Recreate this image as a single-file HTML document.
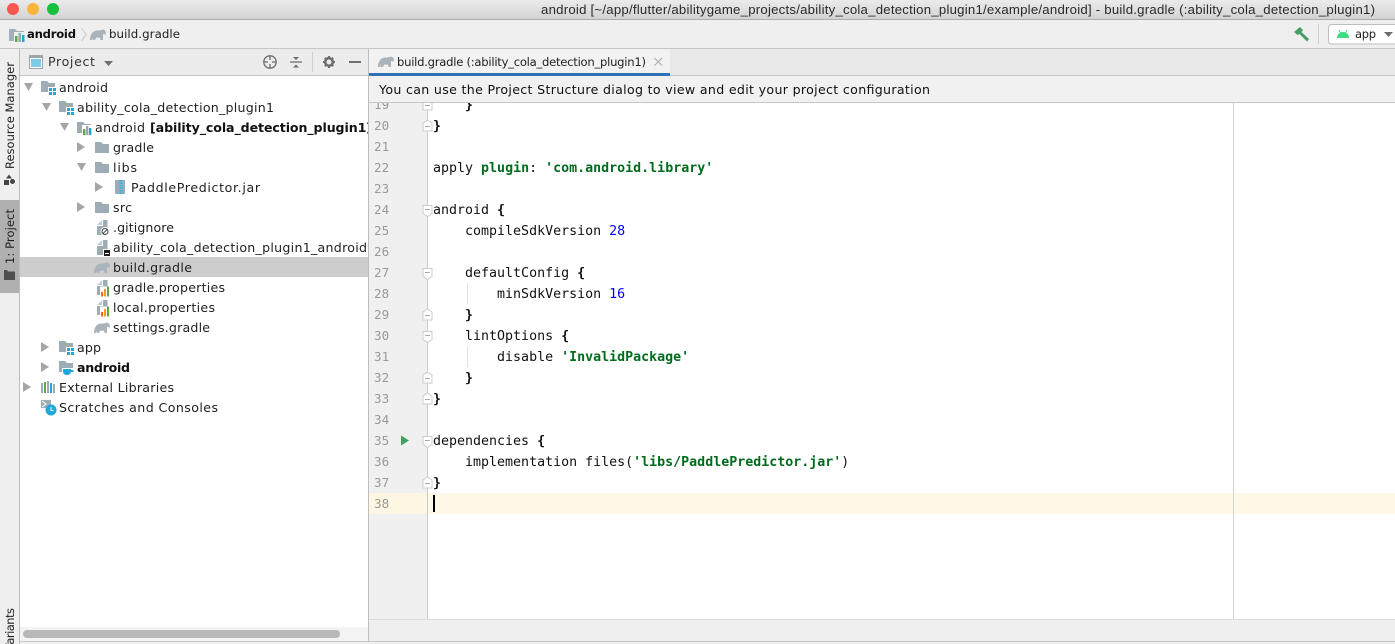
<!DOCTYPE html>
<html><head><meta charset="utf-8"><style>
html,body{margin:0;padding:0;background:#efefef;width:1395px;height:644px;overflow:hidden}
svg{display:block}
.t{font-family:"DejaVu Sans",sans-serif;font-size:12.6px;fill:#1f1f1f}
.b{font-weight:bold;fill:#111}
.c{font-family:"DejaVu Sans Mono",monospace;font-size:13.3px;fill:#111;white-space:pre}
.n{font-family:"DejaVu Sans Mono",monospace;font-size:12.6px;fill:#999}
.g{fill:#006c1c;font-weight:bold}
.k{fill:#0000ff}
.br{font-weight:bold}
</style></head><body>
<svg width="1395" height="644" viewBox="0 0 1395 644" xmlns="http://www.w3.org/2000/svg">
<defs>
<linearGradient id="tb" x1="0" y1="0" x2="0" y2="1"><stop offset="0" stop-color="#ebebeb"/><stop offset="1" stop-color="#d3d3d3"/></linearGradient>
<clipPath id="ed"><rect x="369" y="103" width="1026" height="516"/></clipPath>
<clipPath id="tr"><rect x="20" y="76" width="348" height="550"/></clipPath>
<clipPath id="lf"><rect x="0" y="49" width="19" height="595"/></clipPath>
<path id="fd" d="M0 0h6l2 2h6v9H0z" fill="#9eacb6"/>
<path id="el" d="M0 11C0 7 1.500 2 7 1.500C9 1.500 10 1.800 11 1C13 0 15.200.8 15.700 3C16 4.600 15.600 5.800 14.800 5.800L14.200 4.600L13 5.400V11H10.600L10 8.600H6L5.200 11H3.200L3 8.800L2.200 11Z" fill="#a9b3bb"/>
<g id="mod"><use href="#fd"/><rect x="7" y="6" width="9" height="9" fill="#fff"/><path d="M8 7h3v3H8zM12 7h3v3h-3zM8 11h3v3H8zM12 11h3v3h-3z" fill="#1ea7d9"/></g>
<g id="chf"><use href="#fd"/><rect x="5" y="3" width="10" height="10" fill="#fff"/><rect x="6" y="7" width="2.400" height="6" fill="#5da84a"/><rect x="9" y="4" width="2.400" height="9" fill="#9aa7b0"/><rect x="12" y="6" width="2.400" height="7" fill="#1ea7d9"/></g>
<g id="nvf"><path d="M0 0h6l2 2h7v10H0z" fill="#a3b0ba"/><rect x="5" y="3" width="11" height="10" fill="#efefef"/><rect x="6" y="7" width="2.500" height="6" fill="#5da84a"/><rect x="9.500" y="4" width="2.500" height="9" fill="#9aa7b0"/><rect x="13" y="6" width="2.500" height="7" fill="#1ea7d9"/></g>
<g id="fl"><path d="M0 5L5 0V5Z" fill="#c4ccd2"/><path d="M6 0H10.500V6H6V0ZM0 6H10.500V15H0Z" fill="#9eacb6"/></g>
<g id="pr"><use href="#fl"/><rect x="3" y="6.500" width="10" height="10" fill="#fff"/><rect x="4" y="12" width="2" height="4.500" fill="#f26522"/><rect x="7" y="9" width="2" height="7.500" fill="#f59b23"/><rect x="10" y="6.500" width="2" height="10" fill="#5da84a"/></g>
<path id="rt" d="M0 0L8 5L0 10Z" fill="#a6a6a6"/>
<path id="dn" d="M0 0H9L4.500 8Z" fill="#a6a6a6"/>
<g id="fe"><path d="M-4.500-5.500H4.500V2.500L0 5.500L-4.500 2.500Z" fill="#fff" stroke="#ccc"/><path d="M-2.500-1.500H2.500" stroke="#aaa"/></g>
<g id="fu"><path d="M-4.500 5.500H4.500V-2.500L0-5.500L-4.500-2.500Z" fill="#fff" stroke="#ccc"/><path d="M-2.500 1H2.500" stroke="#aaa"/></g>
</defs>

<!-- base -->
<rect width="1395" height="644" fill="#efefef"/>
<!-- title bar -->
<rect width="1395" height="19" fill="url(#tb)"/>
<rect y="19" width="1395" height="1" fill="#adadad"/>
<circle cx="13" cy="9" r="6" fill="#fb5650"/><circle cx="33" cy="9" r="6" fill="#fdb43c"/><circle cx="53" cy="9" r="6" fill="#18c03c"/>
<text x="541" y="14" font-family="Liberation Sans,sans-serif" font-size="13.2" fill="#2a2a2a" textLength="834" lengthAdjust="spacing">android [~/app/flutter/abilitygame_projects/ability_cola_detection_plugin1/example/android] - build.gradle (:ability_cola_detection_plugin1)</text>

<!-- nav bar -->
<rect y="48" width="1395" height="1" fill="#c6c6c6"/>
<use href="#nvf" x="9" y="29"/>
<text class="t b" x="27" y="38" textLength="49" lengthAdjust="spacing" style="font-size:11.6px">android</text>
<path d="M81.500 28L86 34.500L81.500 41" fill="none" stroke="#c8c8c8"/>
<use href="#el" x="90" y="29"/>
<text class="t" x="109" y="38" textLength="71" lengthAdjust="spacing" style="font-size:11.8px">build.gradle</text>
<path d="M1294 32L1300 27L1303 30L1301.500 32L1309 39L1307 41.500L1299.500 34L1297.500 35Z" fill="#479e62"/>
<rect x="1318" y="24" width="1" height="20" fill="#cfcfcf"/>
<rect x="1328.500" y="24.500" width="80" height="19.500" rx="3" fill="#fff" stroke="#bdbdbd"/>
<path d="M1337 38C1337 34 1340 32 1343 32C1346 32 1349 34 1349 38Z" fill="#3ddc84"/>
<path d="M1339 30L1340.500 33M1347 30L1345.500 33" stroke="#3ddc84"/>
<text class="t" x="1355" y="38" textLength="21" lengthAdjust="spacing" style="font-size:11.5px">app</text>
<path d="M1384 32H1393L1388.500 37Z" fill="#6e6e6e"/>

<!-- left strip -->
<rect x="19" y="49" width="1" height="595" fill="#bdbdbd"/>
<g clip-path="url(#lf)">
<rect x="0" y="200" width="19" height="93" fill="#b0b0b0"/>
<text class="t" transform="translate(14 169) rotate(-90)" textLength="107" lengthAdjust="spacing" style="font-size:11.500px">Resource Manager</text>
<text class="t" transform="translate(14 264) rotate(-90)" textLength="55" lengthAdjust="spacing" style="font-size:11.500px">1: Project</text>
<text class="t" transform="translate(14 651) rotate(-90)" textLength="43" lengthAdjust="spacing" style="font-size:11.500px">Variants</text>
<path d="M4 185V180H9V185ZM10 181.500A2.500 2.500 0 1 1 15 181.500A2.500 2.500 0 1 1 10 181.500ZM6 178.500L9 174.500L12 178.500Z" fill="#444"/>
<path d="M4 280V270H7L8 271.500H15V280Z" fill="#4f4f4f"/>
</g>

<!-- project header -->
<rect x="20" y="49" width="348" height="26" fill="#ececec"/>
<rect x="20" y="75" width="348" height="1" fill="#c6c6c6"/>
<rect x="29.500" y="55.500" width="13" height="13" fill="#fff" stroke="#9aa7b0"/>
<rect x="29" y="55" width="14" height="3" fill="#9aa7b0"/>
<rect x="31" y="59" width="10" height="8" fill="#7fcbe6"/>
<text class="t" x="48" y="66" textLength="47" lengthAdjust="spacing" style="fill:#333">Project</text>
<path d="M104 61H113L108.500 66Z" fill="#6e6e6e"/>
<circle cx="270" cy="62" r="6.200" fill="none" stroke="#6e6e6e" stroke-width="1.300"/>
<path d="M270 56V60M270 64V68M264 62H268M272 62H276" stroke="#6e6e6e" stroke-width="1.300"/>
<path d="M290 62H302" stroke="#6e6e6e" stroke-width="1.300"/>
<path d="M293 57H299L296 60ZM293 67.500H299L296 64.500Z" fill="#6e6e6e"/>
<rect x="312" y="52" width="1" height="20" fill="#cfcfcf"/>
<circle cx="329" cy="62" r="3.800" fill="none" stroke="#6e6e6e" stroke-width="2.600"/>
<path d="M329 56V58M329 66V68M323 62H325M333 62H335M324.800 57.800L326.200 59.200M331.800 64.800L333.200 66.200M333.200 57.800L331.800 59.200M326.200 64.800L324.800 66.200" stroke="#6e6e6e" stroke-width="2"/>
<rect x="349" y="61" width="12" height="2" fill="#6e6e6e"/>

<!-- tree -->
<rect x="20" y="76" width="348" height="551" fill="#fff"/>
<rect x="20" y="257" width="348" height="20" fill="#cdcdcd"/>
<g clip-path="url(#tr)">
<use href="#dn" x="24" y="83"/><use href="#mod" x="41" y="81"/>
<text class="t" x="59" y="92" textLength="49" lengthAdjust="spacing">android</text>
<use href="#dn" x="42" y="103"/><use href="#mod" x="59" y="101"/>
<text class="t" x="77" y="112" textLength="197" lengthAdjust="spacing">ability_cola_detection_plugin1</text>
<use href="#dn" x="60" y="123"/><use href="#chf" x="77" y="122"/>
<text class="t" x="95" y="132" textLength="50" lengthAdjust="spacing">android</text>
<text class="t b" x="150" y="132" textLength="222" lengthAdjust="spacing">[ability_cola_detection_plugin1]</text>
<use href="#rt" x="77" y="142"/><use href="#fd" x="95" y="142"/>
<text class="t" x="113" y="152" textLength="41" lengthAdjust="spacing">gradle</text>
<use href="#dn" x="77" y="163"/><use href="#fd" x="95" y="162"/>
<text class="t" x="113" y="172" textLength="24" lengthAdjust="spacing">libs</text>
<use href="#rt" x="95" y="182"/>
<rect x="115" y="180" width="10" height="14" fill="#9eacb6"/><path d="M121 180v14" stroke="#35b4e0" stroke-width="3" stroke-dasharray="1.500 1"/>
<text class="t" x="131" y="192" textLength="129" lengthAdjust="spacing">PaddlePredictor.jar</text>
<use href="#rt" x="77" y="202"/><use href="#fd" x="95" y="202"/>
<text class="t" x="113" y="212" textLength="19" lengthAdjust="spacing">src</text>

<use href="#fl" x="97" y="220"/><circle cx="105" cy="231.500" r="4.500" fill="#fff"/><circle cx="105" cy="231.500" r="3" fill="none" stroke="#444"/><path d="M103 233.500L107 229.500" stroke="#444"/>
<text class="t" x="113" y="232" textLength="61" lengthAdjust="spacing">.gitignore</text>
<use href="#fl" x="97" y="240"/><rect x="103" y="249" width="8" height="7" fill="#fff"/><rect x="104" y="250" width="6" height="6" fill="#1c1c1c"/><rect x="105" y="253" width="4" height="1" fill="#fff"/>
<text class="t" x="113" y="252" textLength="254" lengthAdjust="spacing">ability_cola_detection_plugin1_android</text>
<use href="#el" x="94" y="262"/>
<text class="t" x="113" y="272" textLength="79" lengthAdjust="spacing">build.gradle</text>
<use href="#pr" x="97" y="280"/>
<text class="t" x="113" y="292" textLength="112" lengthAdjust="spacing">gradle.properties</text>
<use href="#pr" x="97" y="300"/>
<text class="t" x="113" y="312" textLength="102" lengthAdjust="spacing">local.properties</text>
<use href="#el" x="94" y="322"/>
<text class="t" x="113" y="332" textLength="97" lengthAdjust="spacing">settings.gradle</text>

<use href="#rt" x="41" y="342"/><use href="#mod" x="59" y="341"/>
<text class="t" x="77" y="352" textLength="24" lengthAdjust="spacing">app</text>
<use href="#rt" x="41" y="362"/><use href="#fd" x="59" y="361"/>
<rect x="62" y="368" width="12" height="7" fill="#fff"/><path d="M63 369H71V371C71 374 69 375 67 375C65 375 63 374 63 371ZM71 370H73.500V372H71Z" fill="#1ea7d9"/>
<text class="t b" x="77" y="372" textLength="53" lengthAdjust="spacing">android</text>
<use href="#rt" x="23" y="382"/>
<path d="M41 383h2v10h-2z" fill="#9eacb6"/><path d="M44 382h2v11h-2z" fill="#5da84a"/><path d="M47 381h2v12h-2z" fill="#9eacb6"/><path d="M50 383h2v10h-2z" fill="#1ea7d9"/><path d="M53 384h2v9h-2z" fill="#9eacb6"/>
<text class="t" x="59" y="392" textLength="115" lengthAdjust="spacing">External Libraries</text>
<rect x="41" y="400" width="10" height="8" fill="#9eacb6"/><path d="M42 401L46 404L42 407" fill="none" stroke="#fff"/>
<circle cx="51" cy="410" r="5.500" fill="#1ea7d9"/><path d="M51 407V410.500H53.500" fill="none" stroke="#fff"/>
<text class="t" x="59" y="412" textLength="159" lengthAdjust="spacing">Scratches and Consoles</text>
</g>
<!-- tree scrollbar -->
<rect x="20" y="627" width="348" height="14" fill="#f3f3f3"/>
<rect x="23" y="630" width="317" height="8" rx="4" fill="#b8b8b8"/>
<rect x="20" y="641" width="1375" height="1" fill="#c8c8c8"/>

<!-- splitter -->
<rect x="368" y="49" width="1" height="592" fill="#bdbdbd"/>

<!-- tab bar -->
<rect x="369" y="49" width="1026" height="26" fill="#e8e8e8"/>
<rect x="369" y="49" width="301" height="24" fill="#f2f2f2"/>
<rect x="369" y="73" width="301" height="3" fill="#2f72b8"/>
<rect x="670" y="75" width="725" height="1" fill="#c6c6c6"/>
<use href="#el" x="378" y="56"/>
<text class="t" x="397" y="66" textLength="249" lengthAdjust="spacing" style="font-size:11.600px">build.gradle (:ability_cola_detection_plugin1)</text>
<path d="M654.500 58L662 65.500M662 58L654.500 65.500" stroke="#a8a8a8"/>

<!-- notification bar -->
<rect x="369" y="76" width="1026" height="26" fill="#f1f1f1"/>
<rect x="369" y="102" width="1026" height="1" fill="#c6c6c6"/>
<text class="t" x="379" y="94" textLength="551" lengthAdjust="spacing" style="fill:#111">You can use the Project Structure dialog to view and edit your project configuration</text>

<!-- editor -->
<rect x="369" y="103" width="1026" height="516" fill="#fff"/>
<rect x="369" y="103" width="58" height="516" fill="#f0f0f0"/>
<rect x="369" y="493" width="58" height="21" fill="#fcf6e2"/>
<rect x="428" y="493" width="967" height="21" fill="#fef9e6"/>
<rect x="427" y="103" width="1" height="516" fill="#cbcbcb"/>
<rect x="1233" y="103" width="1" height="516" fill="#d4d4d4"/>
<rect x="369" y="619" width="1026" height="1" fill="#dcdcdc"/>

<g clip-path="url(#ed)">
<text class="n" x="374" y="109">19</text><text class="n" x="374" y="130">20</text><text class="n" x="374" y="151">21</text><text class="n" x="374" y="172">22</text><text class="n" x="374" y="193">23</text><text class="n" x="374" y="214">24</text><text class="n" x="374" y="235">25</text><text class="n" x="374" y="256">26</text><text class="n" x="374" y="277">27</text><text class="n" x="374" y="298">28</text><text class="n" x="374" y="319">29</text><text class="n" x="374" y="340">30</text><text class="n" x="374" y="361">31</text><text class="n" x="374" y="382">32</text><text class="n" x="374" y="403">33</text><text class="n" x="374" y="424">34</text><text class="n" x="374" y="445">35</text><text class="n" x="374" y="466">36</text><text class="n" x="374" y="487">37</text><text class="n" x="374" y="508">38</text>
<path d="M401 435.500L409 440.500L401 445.500Z" fill="#3f9f5f"/>
<use href="#fu" x="427.500" y="104.500"/><use href="#fu" x="427.500" y="125.500"/>
<use href="#fe" x="427.500" y="211"/><use href="#fe" x="427.500" y="274"/><use href="#fu" x="427.500" y="314.500"/><use href="#fe" x="427.500" y="337"/><use href="#fu" x="427.500" y="377.500"/><use href="#fu" x="427.500" y="398.500"/><use href="#fe" x="427.500" y="442"/><use href="#fu" x="427.500" y="482.500"/>
<rect x="467" y="283" width="1" height="21" fill="#e2e2e2"/><rect x="467" y="346" width="1" height="21" fill="#e2e2e2"/>

<text class="c" x="433" y="109">    <tspan class="br">}</tspan></text>
<text class="c" x="433" y="130"><tspan class="br">}</tspan></text>
<text class="c" x="433" y="172">apply <tspan class="g">plugin</tspan>: <tspan class="g">'com.android.library'</tspan></text>
<text class="c" x="433" y="214">android <tspan class="br">{</tspan></text>
<text class="c" x="433" y="235">    compileSdkVersion <tspan class="k">28</tspan></text>
<text class="c" x="433" y="277">    defaultConfig <tspan class="br">{</tspan></text>
<text class="c" x="433" y="298">        minSdkVersion <tspan class="k">16</tspan></text>
<text class="c" x="433" y="319">    <tspan class="br">}</tspan></text>
<text class="c" x="433" y="340">    lintOptions <tspan class="br">{</tspan></text>
<text class="c" x="433" y="361">        disable <tspan class="g">'InvalidPackage'</tspan></text>
<text class="c" x="433" y="382">    <tspan class="br">}</tspan></text>
<text class="c" x="433" y="403"><tspan class="br">}</tspan></text>
<text class="c" x="433" y="445">dependencies <tspan class="br">{</tspan></text>
<text class="c" x="433" y="466">    implementation files(<tspan class="g">'libs/PaddlePredictor.jar'</tspan>)</text>
<text class="c" x="433" y="487"><tspan class="br">}</tspan></text>
<rect x="433" y="495" width="2" height="17" fill="#000"/>
</g>
</svg>
</body></html>
